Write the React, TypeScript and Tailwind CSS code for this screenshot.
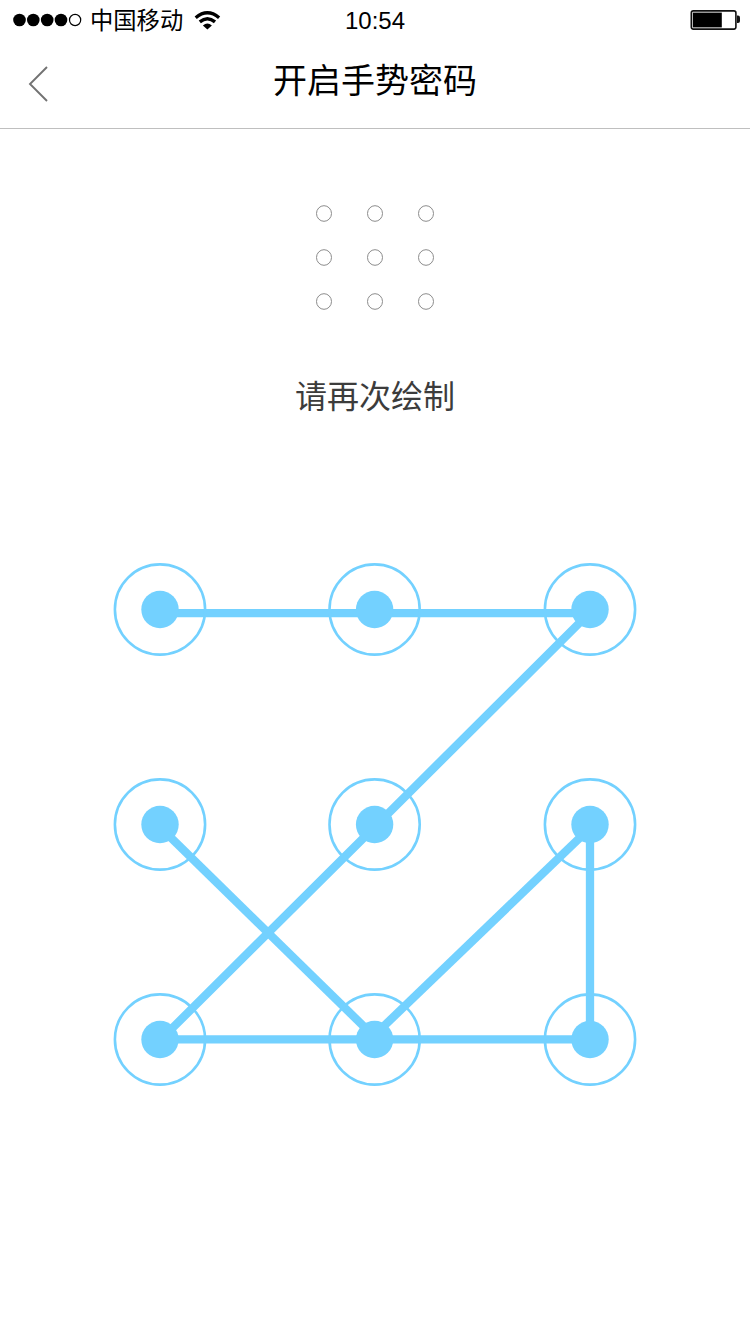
const CYAN = '#73d1ff';
const COLS = [160, 374.6, 590];
const ROWS = [609.5, 824.5, 1039.5];
const TOP = 550;

function StatusBar() {
  return (
    <div className="grid h-10 grid-cols-3 items-center">
      <div className="flex items-center pl-[13px]">
        <svg width="70" height="14" viewBox="0 0 70 14">
          {[6.5, 20.3, 34.2, 48].map((x) => (
            <circle key={x} cx={x} cy="7" r="6.3" fill="#000" />
          ))}
          <circle cx="62.1" cy="7" r="5.6" fill="none" stroke="#000" strokeWidth="1.2" />
        </svg>
        <span className="ml-[7px] pt-0.5 text-[23.3px] leading-[38px] whitespace-nowrap">中国移动</span>
        <svg className="ml-[11px]" width="27" height="20" viewBox="0 0 27 20">
          <g fill="none" stroke="#000" strokeWidth="3.4">
            <path d="M1.7 7.7 Q13.4 -2 25.1 7.7" />
            <path d="M5.8 11.9 Q13.4 5.6 21 11.9" />
          </g>
          <path d="M8.9 15.4 Q13.4 11.4 17.9 15.4 L13.4 19.5 Z" fill="#000" />
        </svg>
      </div>
      <time className="pt-0.5 text-center text-[24px] leading-[38px]">10:54</time>
      <div className="flex justify-end pr-2.5">
        <svg width="50" height="20" viewBox="0 0 50 20">
          <rect x="1.3" y="0.9" width="44.6" height="18.2" rx="2" fill="#fff" stroke="#111" strokeWidth="1.6" />
          <rect x="2.8" y="2.6" width="29" height="14.8" fill="#000" />
          <path d="M47 5.5 h1 q2 0 2 2 v3.5 q0 2-2 2 h-1z" fill="#111" />
        </svg>
      </div>
    </div>
  );
}

function Header() {
  return (
    <header className="grid h-[89px] grid-cols-3 items-center border-b border-[#bfbfbf]">
      <button aria-label="返回" className="pl-7">
        <svg width="22" height="36" viewBox="0 0 22 36" fill="none" stroke="#727272" strokeWidth="1.9">
          <path d="M19 1 L2 18 L19 35" />
        </svg>
      </button>
      <h1 className="pb-1.5 text-center text-[34px] leading-10 whitespace-nowrap">开启手势密码</h1>
    </header>
  );
}

function Preview() {
  return (
    <div className="mx-auto mt-[76px] grid w-[118px] grid-cols-3 gap-x-[35px] gap-y-[27px]">
      {Array.from({ length: 9 }, (_, i) => (
        <svg key={i} className="h-[17px] w-4" viewBox="0 0 16 17">
          <ellipse cx="8" cy="8.5" rx="7.5" ry="7.8" fill="none" stroke="#8c8c8c" strokeWidth="1" />
        </svg>
      ))}
    </div>
  );
}

function PatternLock() {
  return (
    <svg className="mt-[133px] block" width="750" height="550" viewBox={`0 ${TOP} 750 550`}>
      <g fill="none" stroke={CYAN} strokeWidth="8.3">
        <path d="M160 613.2 H590" />
        <path d="M588 614.4 L374.6 827 L160 1040.4" />
        <path d="M160 827 L374.6 1037" />
        <path d="M374.6 1035 L590 828" />
        <path d="M590 824.5 V1039.3" />
        <path d="M160 1039.3 H590" />
      </g>
      {ROWS.map((y) =>
        COLS.map((x) => (
          <g key={`${x}-${y}`}>
            <circle cx={x} cy={y} r="45.1" fill="none" stroke={CYAN} strokeWidth="2.6" />
            <circle cx={x} cy={y} r="18.7" fill={CYAN} />
          </g>
        )),
      )}
    </svg>
  );
}

export default function App() {
  return (
    <main className="h-[1334px] w-[750px] overflow-hidden bg-white font-['Liberation_Sans','Noto_Sans_CJK_SC',sans-serif] text-black">
      <StatusBar />
      <Header />
      <Preview />
      <p className="mt-[67px] text-center text-[32px] leading-10 text-[#3c3c3c]">请再次绘制</p>
      <PatternLock />
    </main>
  );
}
